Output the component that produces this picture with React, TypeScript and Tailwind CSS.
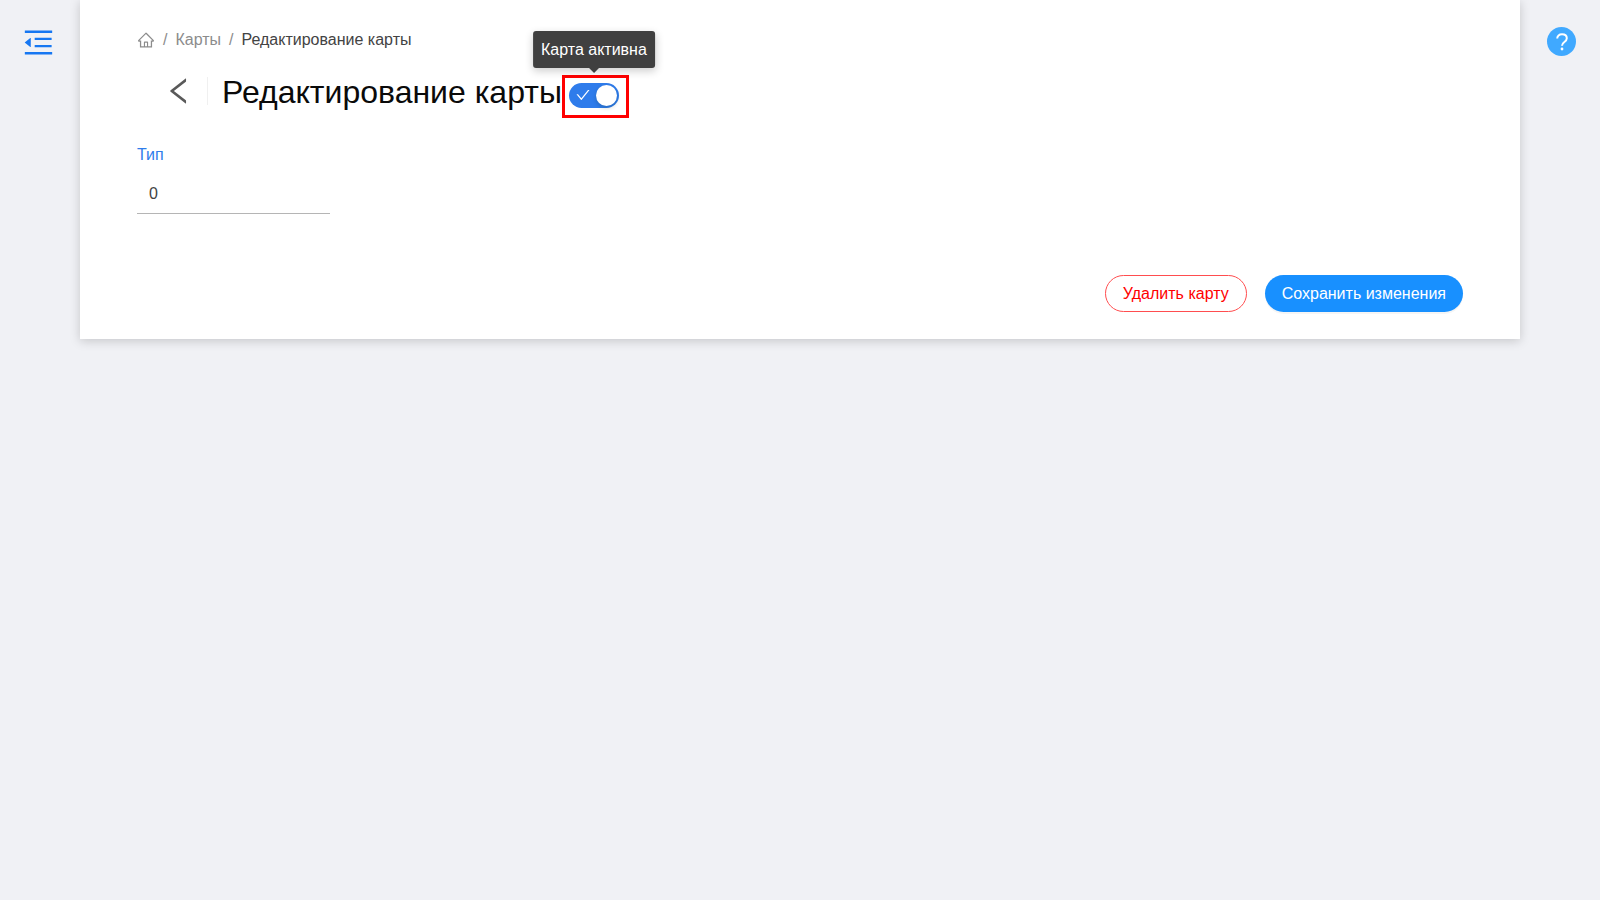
import React, { useState } from 'react';
import {
  AiOutlineCheck,
  AiOutlineHome,
  AiOutlineLeft,
  AiOutlineMenuFold,
} from 'react-icons/ai';

function Breadcrumbs() {
  return (
    <nav aria-label="breadcrumb" className="flex items-center h-6 text-[#8c8c8c]">
      <a href="#home" aria-label="Главная">
        <AiOutlineHome size={18} />
      </a>
      <span className="mx-2">/</span>
      <a href="#cards">Карты</a>
      <span className="mx-2">/</span>
      <span className="text-[#434343]">Редактирование карты</span>
    </nav>
  );
}

function ActiveSwitch() {
  const [active, setActive] = useState(true);

  return (
    <div className="mt-2 flex border-3 border-[#ff0000] pl-1 pr-[7px] pt-[5px] pb-[7px]">
      <div className="relative flex">
        <label className="relative flex h-[25px] w-[50px] cursor-pointer">
          <input
            type="checkbox"
            role="switch"
            aria-label="Карта активна"
            checked={active}
            onChange={(e) => setActive(e.target.checked)}
            className="peer h-full w-full appearance-none rounded-full bg-[#bfbfbf] checked:bg-[#2f7ceb] cursor-pointer"
          />
          <AiOutlineCheck size={16} className="absolute left-[6px] top-1 text-white hidden peer-checked:block pointer-events-none" />
          <span className="absolute left-[2px] top-[2px] size-[21px] rounded-full bg-white shadow-[0_2px_4px_rgba(0,35,11,0.2)] peer-checked:left-[27px] pointer-events-none" />
        </label>

        {/* Tooltip above the switch */}
        <div
          role="tooltip"
          className="absolute bottom-full left-1/2 mb-[15px] -translate-x-1/2 whitespace-nowrap rounded-[3px] bg-[#404040] px-2 py-[6px] text-base leading-[25px] text-white shadow-[0_3px_8px_rgba(0,0,0,0.2)]"
        >
          Карта активна
          <svg className="absolute left-1/2 top-full -translate-x-1/2" width="10" height="5" viewBox="0 0 10 5">
            <path d="M0 0h10L5 5z" fill="#404040" />
          </svg>
        </div>
      </div>
    </div>
  );
}

export default function App() {
  const [type, setType] = useState('0');

  return (
    <div className="flex min-h-screen items-start bg-[#f0f1f5] font-['Liberation_Sans',Arial,sans-serif] text-base leading-6">
      {/* Left rail */}
      <div className="flex w-20 shrink-0 pt-[25px] pl-[21px]">
        <button type="button" aria-label="Меню" className="text-[#1677f2] cursor-pointer">
          <AiOutlineMenuFold size={35} />
        </button>
      </div>

      <main className="flex-1 min-w-0 bg-white px-[57px] pt-7 pb-[27px] shadow-[0_2px_10px_rgba(0,0,0,0.18)]">
        <Breadcrumbs />

        <div className="mt-4 flex items-center h-12 pl-[25px]">
          <button type="button" aria-label="Назад" className="mb-[2px] text-[#595959] cursor-pointer">
            <AiOutlineLeft size={34} />
          </button>
          <span className="ml-[11px] mb-[2px] h-7 w-px bg-[#f0f0f0]" />
          <h1 className="ml-[14px] text-[32px] leading-12 text-[#0a0a0a]">Редактирование карты</h1>
          <ActiveSwitch />
        </div>

        <form onSubmit={(e) => e.preventDefault()}>
          <div className="mt-[27px] flex w-[193px] flex-col">
            <label htmlFor="card-type" className="text-[#2f7ceb]">Тип</label>
            <input
              id="card-type"
              type="text"
              value={type}
              onChange={(e) => setType(e.target.value)}
              className="mt-2 h-[39px] border-b border-[#b5b5b5] px-3 text-[#434343] outline-none"
            />
          </div>

          <div className="mt-[61px] flex justify-end gap-[18px]">
            <button
              type="button"
              className="h-[37px] rounded-full border border-[#ff4d4f] px-[17px] text-[#ff0000] cursor-pointer"
            >
              Удалить карту
            </button>
            <button
              type="submit"
              className="h-[37px] rounded-full bg-[#1890ff] px-[17px] text-white shadow-[0_2px_0_rgba(0,0,0,0.04)] cursor-pointer"
            >
              Сохранить изменения
            </button>
          </div>
        </form>
      </main>

      {/* Right rail */}
      <div className="flex w-20 shrink-0 pt-[27px] pl-[27px]">
        <button
          type="button"
          aria-label="Помощь"
          className="flex size-[29px] items-center justify-center rounded-full bg-[#40a9ff] text-white cursor-pointer"
        >
          <svg width="12" height="18" viewBox="0 0 12 18" fill="none">
            <path
              d="M1.2 5.6C1.2 3 3.2 1.3 6 1.3s4.8 1.6 4.8 4c0 1.8-1 2.7-2.4 3.7C6.8 10.1 6 10.8 6 12.7"
              stroke="currentColor"
              strokeWidth="2"
            />
            <circle cx="6" cy="16" r="1.4" fill="currentColor" />
          </svg>
        </button>
      </div>
    </div>
  );
}
